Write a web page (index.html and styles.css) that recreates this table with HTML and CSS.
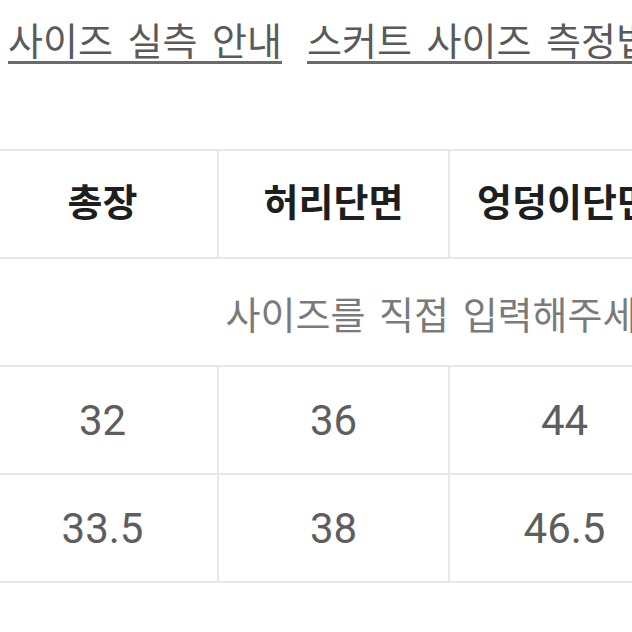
FILE: index.html
```html
<!DOCTYPE html>
<html lang="ko">
<head>
<meta charset="utf-8">
<title>사이즈 실측 안내</title>
<link rel="stylesheet" href="styles.css">
</head>
<body>
<div class="page">
  <nav class="links">
    <a class="link" href="#">사이즈 실측 안내</a>
    <a class="link" href="#">스커트 사이즈 측정법</a>
  </nav>
  <div class="table-wrap">
    <table class="size-table">
      <colgroup>
        <col class="col"><col class="col"><col class="col"><col class="col">
      </colgroup>
      <thead>
        <tr>
          <th>총장</th>
          <th>허리단면</th>
          <th>엉덩이단면</th>
          <th>밑단단면</th>
        </tr>
      </thead>
      <tbody>
        <tr>
          <td class="placeholder" colspan="4">사이즈를 직접 입력해주세요</td>
        </tr>
        <tr>
          <td class="num">32</td>
          <td class="num">36</td>
          <td class="num">44</td>
          <td class="num">50</td>
        </tr>
        <tr>
          <td class="num">33.5</td>
          <td class="num">38</td>
          <td class="num">46.5</td>
          <td class="num">52</td>
        </tr>
      </tbody>
    </table>
  </div>
</div>
</body>
</html>
```

FILE: styles.css
```css
html, body {
  margin: 0;
  padding: 0;
  background: #ffffff;
}

.page {
  width: 632px;
  height: 632px;
  overflow: hidden;
  font-family: "Noto Sans CJK KR", "Noto Sans", sans-serif;
}

.links {
  box-sizing: border-box;
  display: flex;
  gap: 25px;
  padding: 15px 0 0 8px;
  white-space: nowrap;
  font-size: 38px;
  line-height: 48px;
  height: 86px;
}

.link {
  color: #5a5a5a;
  text-decoration: underline;
  text-decoration-color: #6a6a6a;
  text-decoration-thickness: 3px;
  text-underline-offset: 6px;
  word-spacing: 4px;
  flex: none;
}

.table-wrap {
  margin-top: 63px;
  overflow: hidden;
}

.size-table {
  border-collapse: collapse;
  table-layout: fixed;
  width: 924px;
  margin-left: -14px;
}

.col {
  width: 231px;
}

.size-table tr {
  height: 108px;
}

.size-table th,
.size-table td {
  border: 2px solid #e8e8e8;
  padding: 0;
  text-align: center;
  vertical-align: middle;
  white-space: nowrap;
}

.size-table th {
  padding-bottom: 10px;
  font-size: 38px;
  font-weight: 700;
  color: #1e1e1e;
}

.placeholder {
  padding-bottom: 10px;
  font-size: 38px;
  word-spacing: 3px;
  color: #7a7a7a;
}

.num {
  padding-bottom: 8px;
  font-family: Roboto, "Liberation Sans", sans-serif;
  font-size: 42px;
  color: #5e5e5e;
}
```
